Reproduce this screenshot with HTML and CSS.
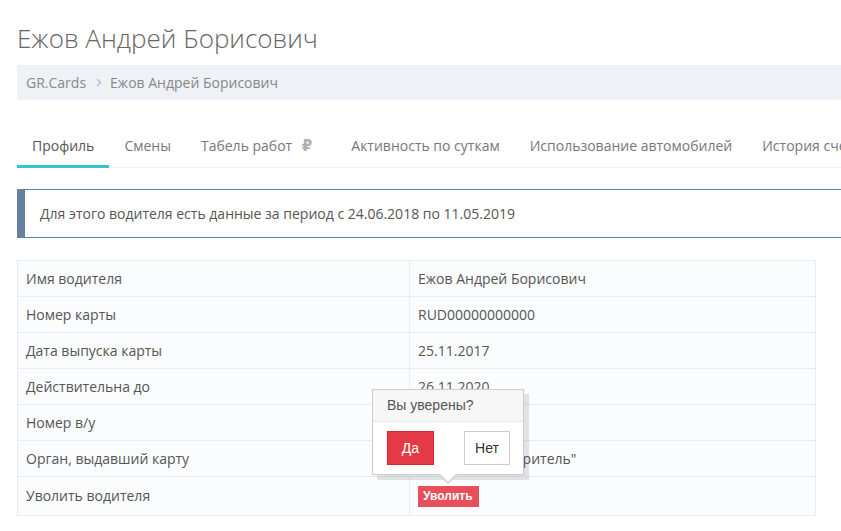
FILE: index.html
```html
<!DOCTYPE html>
<html lang="ru">
<head>
  <meta charset="UTF-8">
  <meta name="viewport" content="width=device-width, initial-scale=1.0">
  <title>Ежов Андрей Борисович - GR.Cards</title>
  <link rel="stylesheet" href="styles.css">
</head>
<body>
  <div class="page-content">
    <h1 class="page-title">Ежов Андрей Борисович</h1>

    <div class="page-bar">
      <span class="crumb">GR.Cards</span>
      <svg class="crumb-sep" width="6" height="9" viewBox="0 0 6 9"><polyline points="1,1 4.5,4.5 1,8" fill="none" stroke="#b8bec4" stroke-width="1.4"/></svg>
      <span class="crumb">Ежов Андрей Борисович</span>
    </div>

    <ul class="nav-tabs">
      <li class="active"><a>Профиль</a></li>
      <li><a>Смены</a></li>
      <li><a>Табель работ <span class="rub">&#8381;</span></a></li>
      <li><a>Активность по суткам</a></li>
      <li><a>Использование автомобилей</a></li>
      <li><a>История счетов</a></li>
    </ul>

    <div class="note-info">
      Для этого водителя есть данные за период с 24.06.2018 по 11.05.2019
    </div>

    <div class="table-wrap">
      <table class="driver-table">
        <tr><td>Имя водителя</td><td>Ежов Андрей Борисович</td></tr>
        <tr><td>Номер карты</td><td>RUD00000000000</td></tr>
        <tr><td>Дата выпуска карты</td><td>25.11.2017</td></tr>
        <tr><td>Действительна до</td><td>26.11.2020</td></tr>
        <tr><td>Номер в/у</td><td></td></tr>
        <tr><td>Орган, выдавший карту</td><td>ООО "Удостоверитель"</td></tr>
        <tr><td>Уволить водителя</td><td><button class="btn-fire">Уволить</button></td></tr>
      </table>

      <!-- confirmation popover over the "Уволить" button -->
      <div class="confirm-popover">
        <div class="confirm-title">Вы уверены?</div>
        <div class="confirm-body">
          <button class="btn-yes">Да</button>
          <button class="btn-no">Нет</button>
        </div>
        <span class="confirm-arrow"></span>
      </div>
    </div>
  </div>
</body>
</html>
```

FILE: styles.css
```css
body {
  margin: 0;
  background-color: #fff;
  font-family: 'Open Sans', 'Noto Sans', sans-serif;
  font-size: 14px;
  color: #333;
  overflow: hidden;
}

.page-content {
  width: 1100px;
  padding-left: 17px;
}

.page-title {
  margin: 0;
  padding-top: 20px;
  font-size: 26px;
  line-height: 36px;
  font-weight: 300;
  color: #666;
}

.page-bar {
  margin-top: 9px;
  height: 35px;
  background-color: #eef1f5;
  display: flex;
  align-items: center;
  padding-left: 9px;
  color: #888;
}

.crumb-sep {
  margin: 0 8px 0 10px;
}

.nav-tabs {
  list-style: none;
  margin: 25px 0 0 0;
  padding: 0;
  display: flex;
  border-bottom: 1px solid #eef1f5;
  white-space: nowrap;
}

.nav-tabs li {
  margin-bottom: -1px;
}

.nav-tabs a {
  display: block;
  padding: 11px 15px 9px;
  line-height: 20px;
  color: #777;
  border-bottom: 3px solid transparent;
}

.nav-tabs li.active a {
  color: #555;
  border-bottom-color: #32c5d2;
}

.rub {
  margin-left: 6px;
  margin-right: 9px;
  font-family: 'DejaVu Sans', sans-serif;
  font-weight: bold;
  font-size: 15px;
  color: #b0b0b0;
}

.note-info {
  margin-top: 21px;
  padding: 14px 15px;
  line-height: 19px;
  border: 1px solid #67809f;
  border-left-width: 8px;
  border-right: none;
  color: #555;
}

.table-wrap {
  position: relative;
  margin-top: 22px;
}

.driver-table {
  width: 799px;
  border-collapse: collapse;
  background-color: #fbfcfd;
}

.driver-table td {
  border: 1px solid #e7ecf1;
  padding: 8px 8px;
  line-height: 19px;
  height: 19px;
  color: #555;
}

.driver-table td:first-child {
  width: 375px;
}

.btn-fire {
  font-family: 'Liberation Sans', Arial, sans-serif;
  font-size: 12px;
  font-weight: bold;
  line-height: 19px;
  padding: 1px 6px 1px 5px;
  color: #fff;
  background-color: #e7505a;
  border: none;
  border-radius: 0;
  vertical-align: middle;
}

/* Popover */
.confirm-popover {
  position: absolute;
  left: 355px;
  top: 129px;
  width: 150px;
  background: #fff;
  border: 1px solid #ccc;
  box-shadow: 5px 5px 0 rgba(0, 0, 0, 0.1);
  font-family: 'Liberation Sans', Arial, sans-serif;
}

.confirm-title {
  height: 31px;
  line-height: 31px;
  padding-left: 14px;
  background-color: #f7f7f7;
  border-bottom: 1px solid #ebebeb;
  color: #555;
  font-size: 14px;
}

.confirm-body {
  display: flex;
  justify-content: space-between;
  padding: 9px 13px 9px 14px;
}

.confirm-body button {
  height: 34px;
  font-family: 'Liberation Sans', Arial, sans-serif;
  font-size: 14px;
  border-radius: 0;
}

.btn-yes {
  width: 47px;
  background-color: #e43a45;
  border: 1px solid #e12330;
  color: #fff;
}

.btn-no {
  width: 46px;
  background-color: #fff;
  border: 1px solid #ccc;
  color: #333;
}

.confirm-arrow {
  position: absolute;
  left: 65px;
  bottom: -10px;
  width: 0;
  height: 0;
  border-left: 10px solid transparent;
  border-right: 10px solid transparent;
  border-top: 10px solid #ccc;
}

.confirm-arrow::after {
  content: "";
  position: absolute;
  left: -9px;
  top: -11px;
  border-left: 9px solid transparent;
  border-right: 9px solid transparent;
  border-top: 9px solid #fff;
}
```
